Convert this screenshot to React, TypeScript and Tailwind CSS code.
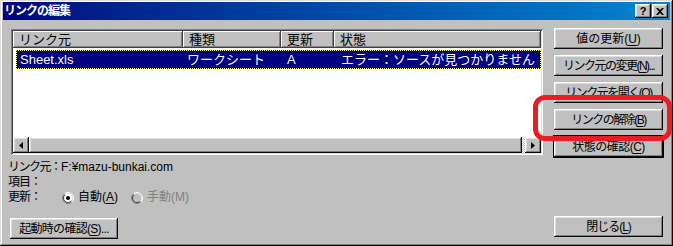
import React from 'react';

const font = "font-['Liberation_Sans','Noto_Sans_CJK_JP',sans-serif]";
const raised =
  'shadow-[inset_-1px_-1px_0_#0a0a0a,inset_1px_1px_0_#ffffff,inset_-2px_-2px_0_#808080,inset_2px_2px_0_#dfdfdf]';

const Btn = ({ children, def = false, cls = '' }: { children: React.ReactNode; def?: boolean; cls?: string }) => (
  <div
    className={`h-[21px] flex items-center justify-center bg-[#c0c0c0] text-[12px] text-black whitespace-nowrap ${raised} ${
      def ? 'outline outline-1 outline-black' : ''
    } ${cls}`}
  >
    {children}
  </div>
);

const U = ({ children }: { children: React.ReactNode }) => <span className="underline underline-offset-2">{children}</span>;

const Head = ({ children, cls }: { children: React.ReactNode; cls: string }) => (
  <div
    className={`h-[17px] flex items-center pl-[6px] bg-[#c0c0c0] text-[13px] shadow-[inset_-1px_-1px_0_#404040,inset_1px_1px_0_#ffffff,inset_-2px_-2px_0_#808080] ${cls}`}
  >
    {children}
  </div>
);

const Radio = ({ on, disabled }: { on?: boolean; disabled?: boolean }) => (
  <svg width="12" height="12" viewBox="0 0 12 12" className="shrink-0">
    <circle cx="6" cy="6" r="5.5" fill="none" stroke="#808080" strokeDasharray="17.3 17.3" strokeDashoffset="-4.3" />
    <circle cx="6" cy="6" r="5.5" fill="none" stroke="#ffffff" strokeDasharray="17.3 17.3" strokeDashoffset="-21.6" />
    <circle cx="6" cy="6" r="4.5" fill={disabled ? '#c0c0c0' : '#ffffff'} stroke="#404040" strokeDasharray="14.1 14.1" strokeDashoffset="-3.5" />
    <circle cx="6" cy="6" r="4.5" fill="none" stroke="#dfdfdf" strokeDasharray="14.1 14.1" strokeDashoffset="-17.6" />
    {on && <circle cx="6" cy="6" r="2" fill="#000" />}
  </svg>
);

export default function App() {
  return (
    <div
      className={`relative w-[673px] h-[246px] bg-[#c0c0c0] flex flex-col px-[3px] pt-[2px] shadow-[inset_-1px_-1px_0_#0a0a0a,inset_1px_1px_0_#dfdfdf,inset_-2px_-2px_0_#808080,inset_2px_2px_0_#ffffff] ${font} text-black`}
    >
      {/* title bar */}
      <div className="h-[18px] flex items-center justify-between bg-gradient-to-r from-[#000080] to-[#1084d0] pl-[1px] pr-[2px]">
        <span className="text-white font-bold text-[12px] leading-none tracking-[-1px]">リンクの編集</span>
        <div className="flex">
          <div className={`w-[16px] h-[14px] bg-[#c0c0c0] flex items-center justify-center text-[11px] font-bold leading-none ${raised}`}>?</div>
          <div className={`ml-[1px] w-[16px] h-[14px] bg-[#c0c0c0] flex items-center justify-center ${raised}`}>
            <svg width="8" height="7" viewBox="0 0 8 7">
              <path d="M0 0h2l2 2 2-2h2L5 3.5 8 7H6L4 5 2 7H0l3-3.5z" fill="#000" />
            </svg>
          </div>
        </div>
      </div>

      <div className="flex mt-[8px]">
        {/* left column */}
        <div className="ml-[5px] w-[535px] flex flex-col">
          <div className="ml-[3px] mt-[1px] h-[126px] flex flex-col bg-white p-[2px] shadow-[inset_1px_1px_0_#808080,inset_-1px_-1px_0_#ffffff,inset_2px_2px_0_#404040,inset_-2px_-2px_0_#dfdfdf]">
            <div className="flex">
              <Head cls="w-[170px]">リンク元</Head>
              <Head cls="w-[98px]">種類</Head>
              <Head cls="w-[53px]">更新</Head>
              <Head cls="flex-1">状態</Head>
            </div>
            <div className="ml-[3px] mt-[2px] h-[19px] flex items-center bg-[#000080] text-white text-[13px] whitespace-nowrap overflow-hidden border border-dotted border-[#ffff80]">
              <div className="w-[165px] pl-[3px]">Sheet.xls</div>
              <div className="w-[98px] pl-[5px]">ワークシート</div>
              <div className="w-[53px] pl-[7px]">A</div>
              <div className="flex-1 pl-[8px]">エラー：ソースが見つかりません</div>
            </div>
            <div className="flex-1" />
            <div className="h-[16px] flex bg-[#c0c0c0]">
              <div className={`w-[16px] flex items-center justify-center ${raised}`}>
                <svg width="4" height="7" viewBox="0 0 4 7"><path d="M4 0v7L0 3.5z" fill="#000" /></svg>
              </div>
              <div className={`flex-1 ${raised}`} />
              <div className="w-[3px] bg-[repeating-conic-gradient(#ffffff_0_25%,#c0c0c0_0_50%)] bg-[length:2px_2px]" />
              <div className={`w-[16px] flex items-center justify-center ${raised}`}>
                <svg width="4" height="7" viewBox="0 0 4 7"><path d="M0 0v7l4-3.5z" fill="#000" /></svg>
              </div>
            </div>
          </div>

          <div className="mt-[5px] text-[12px] leading-[15px] whitespace-nowrap">
            <div className="flex">
              <span className="w-[53px] tracking-[-1.5px]">リンク元：</span>
              <span>F:¥mazu-bunkai.com</span>
            </div>
            <div className="tracking-[-1px]">項目：</div>
            <div className="flex items-center">
              <span className="w-[54px] tracking-[-1px]">更新：</span>
              <Radio on />
              <span className="ml-[4px]">自動(<U>A</U>)</span>
              <span className="ml-[13px] flex"><Radio disabled /></span>
              <span className="ml-[4px] text-[#808080]">手動(M)</span>
            </div>
          </div>

          <div className="mt-[13px] ml-[2px] w-[108px]">
            <Btn cls="tracking-[-0.7px]">起動時の確認(<U>S</U>)...</Btn>
          </div>
        </div>

        {/* right column */}
        <div className="ml-[11px] w-[109px] flex flex-col gap-[6px]">
          <Btn>値の更新(<U>U</U>)</Btn>
          <Btn cls="tracking-[-1.5px]">リンク元の変更(<U>N</U>)...</Btn>
          <Btn cls="tracking-[-1.5px]">リンク元を開く(<U>O</U>)</Btn>
          <Btn cls="tracking-[-1.5px]">リンクの解除(<U>B</U>)</Btn>
          <Btn def cls="tracking-[-0.5px]">状態の確認(<U>C</U>)</Btn>
          <div className="mt-[53px]">
            <Btn cls="tracking-[-1px]">閉じる(<U>L</U>)</Btn>
          </div>
        </div>
      </div>

      {/* red highlight annotation */}
      <div className="absolute left-[533px] top-[95px] w-[139px] h-[46px] rounded-[12px] border-[5px] border-[#ec1c24]" />
    </div>
  );
}
